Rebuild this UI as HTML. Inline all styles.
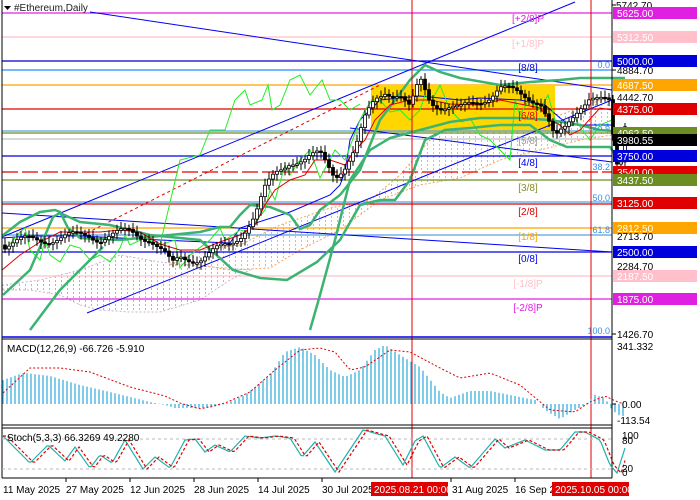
<!DOCTYPE html>
<html><head><meta charset="utf-8"><style>
html,body{margin:0;padding:0;background:#fff}
svg{display:block;font-family:"Liberation Sans",sans-serif}
</style></head><body>
<svg id="s" width="700" height="500" xmlns="http://www.w3.org/2000/svg">
<rect width="700" height="500" fill="#fff"/>
<defs><pattern id="dots" width="6" height="4" patternUnits="userSpaceOnUse"><rect x="1" y="0" width="1" height="2" fill="#f4b080"/></pattern>
<pattern id="dots2" width="6" height="4" patternUnits="userSpaceOnUse"><rect x="1" y="0" width="1" height="2" fill="#c8a8c8"/></pattern></defs>
<polygon points="170,265 200,250 240,245 280,225 330,208 370,200 400,175 430,140 460,120 500,108 540,110 560,115 600,100 612,95 612,135 580,140 540,150 500,160 460,178 420,185 380,200 340,230 300,250 270,268 230,270 200,265" fill="url(#dots)" stroke="#f4a460" stroke-dasharray="2,2" stroke-width="1"/>
<polygon points="3,290 30,290 60,295 80,305 100,310 130,312 160,312 200,300 230,280 250,270 200,266 160,262 120,255 80,270 40,280 3,285" fill="url(#dots2)" stroke="#d0b0d0" stroke-dasharray="2,2" stroke-width="1"/>
<rect x="371" y="86" width="184" height="46" fill="#ffd700"/>
<g stroke-width="1.3">
<line x1="2" y1="13" x2="612" y2="13" stroke="#e020e0"/>
<line x1="2" y1="37" x2="612" y2="37" stroke="#ffc0cb"/>
<line x1="2" y1="61" x2="612" y2="61" stroke="#0000cc"/>
<line x1="2" y1="70" x2="612" y2="70" stroke="#1e90ff"/>
<line x1="2" y1="85" x2="612" y2="85" stroke="#ffa500"/>
<line x1="2" y1="109" x2="612" y2="109" stroke="#e00000"/>
<line x1="2" y1="131" x2="612" y2="131" stroke="#5aa0e0"/>
<line x1="2" y1="133" x2="612" y2="133" stroke="#6b8e23"/>
<line x1="2" y1="139" x2="612" y2="139" stroke="#c0c0c0"/>
<line x1="2" y1="156" x2="612" y2="156" stroke="#0000e0"/>
<line x1="2" y1="172" x2="612" y2="172" stroke="#e00000" stroke-dasharray="16,4"/>
<line x1="2" y1="180" x2="612" y2="180" stroke="#6b8e23"/>
<line x1="2" y1="202" x2="612" y2="202" stroke="#5aa0e0"/>
<line x1="2" y1="204" x2="612" y2="204" stroke="#e00000"/>
<line x1="2" y1="228" x2="612" y2="228" stroke="#ffa500"/>
<line x1="2" y1="235" x2="612" y2="235" stroke="#5aa0e0"/>
<line x1="2" y1="252" x2="612" y2="252" stroke="#0000e0"/>
<line x1="2" y1="276" x2="612" y2="276" stroke="#ffc0cb"/>
<line x1="2" y1="299" x2="612" y2="299" stroke="#e020e0"/>
</g>
<g stroke="#0000ee" stroke-width="1" fill="none">
<line x1="2" y1="237" x2="575" y2="2"/>
<line x1="87" y1="313" x2="612" y2="100"/>
<line x1="90" y1="12" x2="612" y2="90"/>
<line x1="2" y1="213" x2="612" y2="252"/>
<line x1="350" y1="128" x2="612" y2="162"/>
<polyline points="2,238 30,236 80,236 160,240 230,243 240,228 290,212 330,195 340,185 345,172 350,140 360,120 380,100 420,96 460,100 480,98 520,100 545,105 560,118 570,125 600,125 612,125"/>
</g>
<polyline fill="none" stroke="#e00000" stroke-width="1" stroke-dasharray="3,3" points="87,233 380,85"/>
<polyline fill="none" stroke="#22ee22" stroke-width="1" points="5,250 20,232 25,228 30,250 40,260 45,240 50,255 60,262 70,245 80,248 90,260 100,255 110,262 120,248 125,235 130,245 145,238 160,245 175,240 180,268 190,255 210,240 220,228 225,240 240,230 248,232 255,222 265,210 270,190 275,200 285,165 290,175 300,160 310,150 320,178 335,150 345,160 360,120 365,110 372,100 380,100 390,112 400,110 410,120 420,110 425,95 432,100 440,85 448,105 455,115 462,122 470,118 480,135 490,140 500,150 510,160 515,100 520,115 530,98 535,105 540,110 548,95 555,120 565,130 575,118 582,130 590,140 600,125 612,120"/>
<polyline fill="none" stroke="#22ee22" stroke-width="1" points="160,245 180,160 200,155 210,130 225,130 235,100 245,90 250,105 262,100 268,85 272,110 280,105 290,80 300,75 310,95 322,80 330,100 340,100 350,110 360,104"/>
<g stroke="#3cb371" stroke-width="2.5" fill="none">
<polyline points="2,236 20,222 40,212 55,210 60,212 68,228 80,238 120,240 160,236 200,232 220,227 230,227 240,215 250,205 270,207 290,215 300,229 310,225 320,210 340,195 360,170 380,120 395,100 410,80 425,65 440,72 460,78 500,85 530,82 560,80 580,78 600,78 625,78"/>
<polyline points="3,295 30,270 53,217 60,213 80,222 110,225 150,235 200,240 233,270 260,278 287,280 317,262 340,240 360,205 380,200 395,200 410,180 425,140 445,130 470,128 500,125 530,125 550,140 567,147 610,147 617,157 627,160"/>
<polyline points="30,330 60,290 103,247"/>
<polyline points="310,330 320,295 335,240 350,180 370,150 390,138 420,130 450,122 480,118 520,118 550,120 580,125 600,130 625,132"/>
</g>
<polyline fill="none" stroke="#e00000" stroke-width="1" points="2,270 20,255 40,242 60,232 80,232 100,232 120,230 140,232 160,244 180,250 200,250 220,242 240,235 255,225 265,205 275,190 290,180 305,175 315,160 330,160 345,165 355,150 365,140 375,120 390,105 410,100 430,100 450,104 480,105 500,100 520,104 540,108 550,120 560,125 570,135 580,130 600,108 612,110"/>
<g id="candles"></g>
<line x1="412" y1="0" x2="412" y2="478" stroke="#e00000" stroke-width="1"/>
<line x1="591" y1="0" x2="591" y2="478" stroke="#e00000" stroke-width="1"/>
<g font-size="10" text-anchor="middle">
<text x="528" y="22" fill="#e020e0">[+2/8]P</text>
<text x="528" y="47" fill="#ffc0cb">[+1/8]P</text>
<text x="528" y="71" fill="#0000cc">[8/8]</text>
<text x="528" y="119" fill="#e00000">[6/8]</text>
<text x="528" y="144" fill="#a0a0a0">[5/8]</text>
<text x="528" y="166" fill="#0000ee">[4/8]</text>
<text x="528" y="191" fill="#8b8b30">[3/8]</text>
<text x="528" y="215" fill="#e00000">[2/8]</text>
<text x="528" y="240" fill="#ffa500">[1/8]</text>
<text x="528" y="262" fill="#0000ee">[0/8]</text>
<text x="528" y="287" fill="#ffc0cb">[-1/8]P</text>
<text x="528" y="311" fill="#e020e0">[-2/8]P</text>
</g>
<g font-size="9" fill="#3a8ee6" text-anchor="end">
<text x="610" y="68">0.0</text>
<text x="610" y="130">23.6</text>
<text x="610" y="170">38.2</text>
<text x="610" y="201">50.0</text>
<text x="610" y="233">61.8</text>
<text x="610" y="334">100.0</text>
</g>
<text x="14" y="11" font-size="10" fill="#222">#Ethereum,Daily</text>
<polygon points="4,6 11,6 7.5,10" fill="#000"/>
<line x1="2" y1="0" x2="2" y2="478" stroke="#000"/>
<line x1="612" y1="0" x2="612" y2="478" stroke="#000"/>
<line x1="2" y1="337" x2="612" y2="337" stroke="#0000ee" stroke-width="1.5"/>
<line x1="2" y1="339" x2="612" y2="339" stroke="#000"/>
<line x1="2" y1="425" x2="612" y2="425" stroke="#000"/>
<line x1="2" y1="428" x2="612" y2="428" stroke="#000"/>
<line x1="2" y1="478" x2="612" y2="478" stroke="#000"/>
<g id="macd"></g>
<polyline id="sig" fill="none" stroke="#e00000" stroke-width="1" stroke-dasharray="2,2"/>
<text x="7" y="352" font-size="10" fill="#000">MACD(12,26,9) -66.726 -5.910</text>
<line x1="2" y1="439" x2="612" y2="439" stroke="#bbb" stroke-dasharray="3,3"/>
<line x1="2" y1="469" x2="612" y2="469" stroke="#bbb" stroke-dasharray="3,3"/>
<polyline id="st1" fill="none" stroke="#20b2aa" stroke-width="1.2"/>
<polyline id="st2" fill="none" stroke="#e00000" stroke-width="1.2" stroke-dasharray="3,2"/>
<text x="7" y="441" font-size="10" fill="#000">Stoch(5,3,3) 66.3269 49.2280</text>
<g font-size="10" fill="#000">
<text x="616" y="9">5742.70</text>
<rect x="613" y="7" width="84" height="12" fill="#e020e0"/><text x="617" y="17" fill="#fff">5625.00</text>
<rect x="613" y="31" width="84" height="12" fill="#ffc0cb"/><text x="617" y="41" fill="#fff">5312.50</text>
<rect x="613" y="55" width="84" height="12" fill="#0000dd"/><text x="617" y="65" fill="#fff">5000.00</text>
<text x="617" y="74">4884.70</text>
<rect x="613" y="79" width="84" height="12" fill="#ffa500"/><text x="617" y="89" fill="#fff">4687.50</text>
<text x="617" y="101">4442.70</text>
<rect x="613" y="103" width="84" height="12" fill="#e00000"/><text x="617" y="113" fill="#fff">4375.00</text>
<rect x="613" y="127" width="84" height="12" fill="#6b8e23"/><text x="617" y="137" fill="#fff">4062.50</text>
<rect x="613" y="134" width="84" height="12" fill="#000"/><text x="617" y="144" fill="#fff">3980.55</text>
<rect x="613" y="150" width="84" height="12" fill="#0000dd"/><text x="617" y="160" fill="#fff">3750.00</text>
<rect x="613" y="166" width="84" height="12" fill="#e00000"/><text x="617" y="176" fill="#fff">3540.00</text>
<rect x="613" y="174" width="84" height="12" fill="#6b8e23"/><text x="617" y="184" fill="#fff">3437.50</text>
<rect x="613" y="197" width="84" height="12" fill="#e00000"/><text x="617" y="207" fill="#fff">3125.00</text>
<rect x="613" y="222" width="84" height="12" fill="#ffa500"/><text x="617" y="232" fill="#fff">2812.50</text>
<text x="617" y="240">2713.70</text>
<rect x="613" y="246" width="84" height="12" fill="#0000dd"/><text x="617" y="256" fill="#fff">2500.00</text>
<text x="617" y="270">2284.70</text>
<rect x="613" y="270" width="84" height="12" fill="#ffc0cb"/><text x="617" y="280" fill="#fff">2187.50</text>
<rect x="613" y="293" width="84" height="12" fill="#e020e0"/><text x="617" y="303" fill="#fff">1875.00</text>
<text x="617" y="338">1426.70</text>
<text x="617" y="350">341.332</text>
<text x="622" y="408">0.00</text>
<text x="617" y="424">-113.54</text>
<text x="622" y="439">100</text>
<text x="622" y="444">80</text>
<text x="622" y="472">20</text>
<text x="622" y="476">0</text>
</g>
<g stroke="#000"><line x1="612" y1="5" x2="616" y2="5"/><line x1="612" y1="70" x2="616" y2="70"/><line x1="612" y1="334" x2="616" y2="334"/><line x1="612" y1="404" x2="616" y2="404"/></g>
<g font-size="10" fill="#000">
<text x="3" y="493">11 May 2025</text>
<text x="66" y="493">27 May 2025</text>
<text x="130" y="493">12 Jun 2025</text>
<text x="194" y="493">28 Jun 2025</text>
<text x="258" y="493">14 Jul 2025</text>
<text x="322" y="493">30 Jul 2025</text>
<rect x="371" y="482" width="77" height="14" fill="#e00000"/><text x="374" y="493" fill="#fff">2025.08.21 00:00</text>
<text x="452" y="493">31 Aug 2025</text>
<text x="515" y="493">16 Sep 2</text>
<rect x="552" y="482" width="77" height="14" fill="#e00000"/><text x="555" y="493" fill="#fff">2025.10.05 00:00</text>
</g>
<g stroke="#000"><line x1="66" y1="478" x2="66" y2="482"/><line x1="130" y1="478" x2="130" y2="482"/><line x1="194" y1="478" x2="194" y2="482"/><line x1="258" y1="478" x2="258" y2="482"/><line x1="322" y1="478" x2="322" y2="482"/><line x1="451" y1="478" x2="451" y2="482"/><line x1="515" y1="478" x2="515" y2="482"/></g>
</svg>
<script>
(function(){
function I(pts,x){for(var i=0;i<pts.length-1;i++){if(x>=pts[i][0]&&x<=pts[i+1][0]){var t=(x-pts[i][0])/(pts[i+1][0]-pts[i][0]||1);return pts[i][1]+t*(pts[i+1][1]-pts[i][1]);}}return x<pts[0][0]?pts[0][1]:pts[pts.length-1][1];}
var NS="http://www.w3.org/2000/svg";
function el(p,n,a){var e=document.createElementNS(NS,n);for(var k in a)e.setAttribute(k,a[k]);p.appendChild(e);return e;}
var price=[[5,245],[30,240],[60,238],[90,235],[100,238],[130,232],[150,238],[165,255],[172,266],[180,258],[200,258],[230,245],[240,235],[255,215],[265,190],[275,175],[290,160],[305,160],[320,155],[335,175],[345,165],[355,150],[365,120],[375,100],[385,90],[400,95],[410,110],[420,80],[430,100],[440,105],[460,110],[480,100],[490,95],[500,88],[520,95],[540,100],[550,125],[555,140],[565,130],[580,105],[590,95],[600,100],[610,105],[615,160],[620,175],[624,120],[628,135]];
var c=document.getElementById('candles');var prev=I(price,5);
for(var x=5;x<=627;x+=4){var cl=I(price,x)+Math.sin(x*1.7)*5;var o=prev;var hi=Math.min(o,cl)-3-Math.abs(Math.sin(x))*4,lo=Math.max(o,cl)+3+Math.abs(Math.cos(x))*4;
el(c,'line',{x1:x,y1:hi,x2:x,y2:lo,stroke:'#000','stroke-width':1});
var ty=Math.min(o,cl),h=Math.max(1.5,Math.abs(o-cl));
el(c,'rect',{x:x-1.5,y:ty,width:3,height:h,fill:cl<o?'#fff':'#000',stroke:'#000','stroke-width':0.8});prev=cl;}
var macd=[[3,380],[20,374],[25,373],[50,376],[80,385],[110,392],[150,402],[165,405],[175,408],[210,408],[225,404],[245,395],[270,375],[285,352],[300,347],[315,355],[330,370],[345,377],[360,370],[375,350],[385,345],[400,355],[420,367],[440,392],[450,398],[470,391],[490,391],[510,395],[535,400],[545,410],[560,419],[575,410],[585,405],[595,395],[605,398],[612,410],[620,416]];
var sig=[[3,393],[30,368],[60,368],[90,372],[130,387],[165,396],[180,403],[200,409],[225,403],[250,392],[275,370],[300,350],[320,348],[335,352],[350,370],[365,367],[390,350],[410,352],[440,368],[460,378],[490,373],[520,385],[550,410],[575,412],[590,402],[605,396],[620,403]];
var m=document.getElementById('macd');
for(var x=3;x<=625;x+=4){var v=I(macd,x);el(m,'line',{x1:x,y1:404,x2:x,y2:v,stroke:'#2aa8dd','stroke-width':1.2});}
var s='';for(var x=3;x<=625;x+=3)s+=x+','+I(sig,x).toFixed(1)+' ';document.getElementById('sig').setAttribute('points',s);
var st=[[3,436],[30,463],[48,445],[65,461],[75,447],[90,468],[100,455],[112,463],[125,440],[143,469],[155,457],[170,468],[185,440],[195,439],[205,452],[215,445],[230,452],[245,436],[260,438],[275,436],[290,438],[302,457],[315,442],[335,472],[363,430],[385,436],[403,465],[415,441],[423,436],[440,468],[455,457],[470,468],[495,439],[505,448],[525,440],[545,450],[560,450],[575,432],[585,432],[600,440],[610,465],[617,473],[625,448]];
var a='',b='';for(var x=3;x<=625;x+=2){a+=x+','+I(st,x).toFixed(1)+' ';b+=x+','+I(st,x-4).toFixed(1)+' ';}
document.getElementById('st1').setAttribute('points',a);document.getElementById('st2').setAttribute('points',b);
})();
</script>
</body></html>
